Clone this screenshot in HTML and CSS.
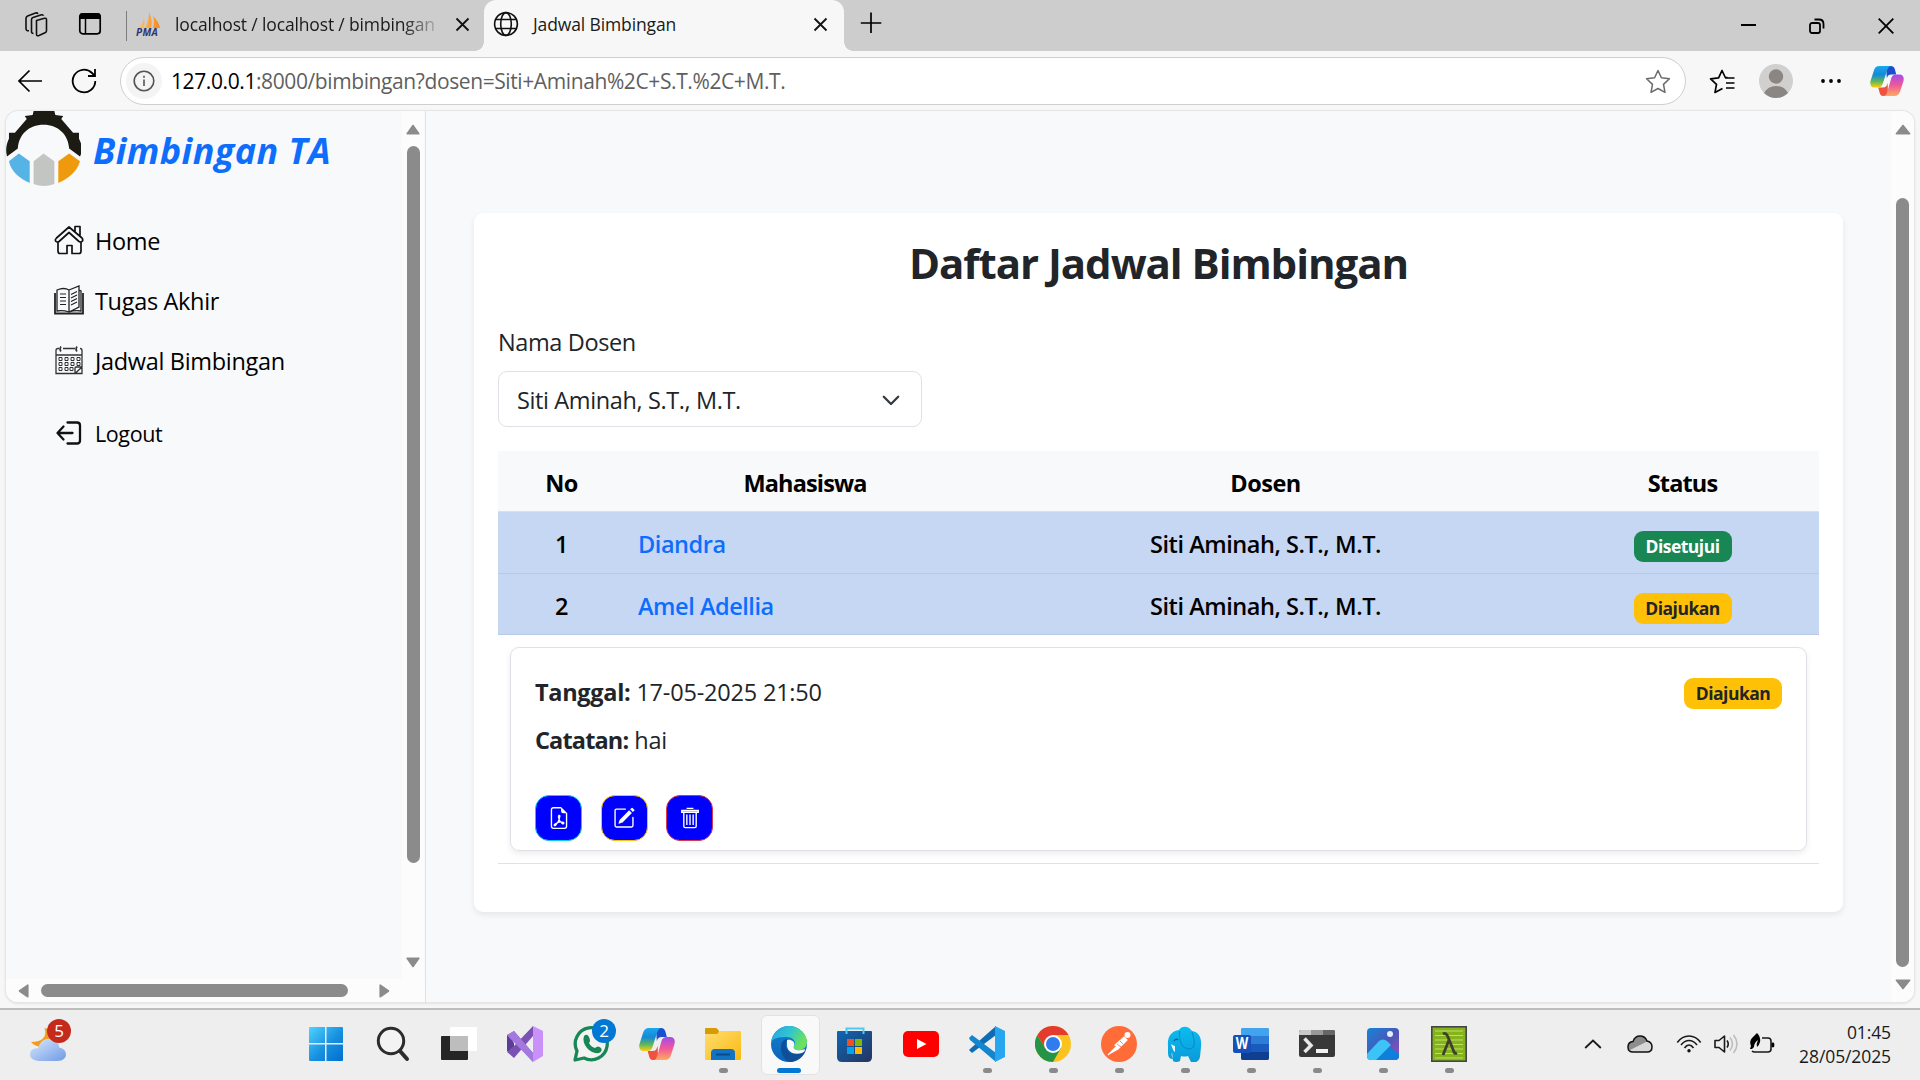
FILE: index.html
```html
<!DOCTYPE html>
<html lang="id">
<head>
<meta charset="utf-8">
<title>Jadwal Bimbingan</title>
<link rel="stylesheet" href="styles.css">
</head>
<body>
<svg width="0" height="0" class="defs" aria-hidden="true">
  <defs>
    <linearGradient id="cpA" x1="0" y1="0" x2="0" y2="1"><stop offset="0" stop-color="#1aa7ee"/><stop offset=".4" stop-color="#1489d8"/><stop offset=".7" stop-color="#59b560"/><stop offset="1" stop-color="#ffd008"/></linearGradient>
    <linearGradient id="cpB" x1="0" y1="0" x2="0" y2="1"><stop offset="0" stop-color="#a24ce8"/><stop offset=".5" stop-color="#f0589a"/><stop offset="1" stop-color="#ffab5c"/></linearGradient>
    <symbol id="copilot" viewBox="0 0 36 34">
      <path d="M17 1h5c2.500 0 3.800 1.300 4.500 4l1.300 5h-5c-3 0-4 1-5 4z" fill="#1b4fd0"/>
      <path d="M19 33h-5c-2.500 0-3.300-1.500-4-4l-1.300-5h5c3 0 4-2 5-5z" fill="#ee5340"/>
      <path d="M10 1h13c-3 0-4 2-5 5l-4.500 14c-1 3-2.500 4-5.500 4H5c-4 0-5.500-3-4.500-7L4 6c1-3.500 3-5 6-5z" fill="url(#cpA)"/>
      <path d="M26 33H14c3 0 3.500-2 4.500-5l4-14c1-3 2.500-4 5.500-4h3c4 0 5.500 3 4.500 7L32 28c-1 3.500-3 5-6 5z" fill="url(#cpB)"/>
    </symbol>
    <linearGradient id="winG" x1="0" y1="0" x2="1" y2="1"><stop offset="0" stop-color="#4fd3ff"/><stop offset=".55" stop-color="#168fe0"/><stop offset="1" stop-color="#0070cf"/></linearGradient>
    <linearGradient id="folderG" x1="0" y1="0" x2="1" y2="1"><stop offset="0" stop-color="#ffdd70"/><stop offset="1" stop-color="#fbb911"/></linearGradient>
    <linearGradient id="edgeTop" x1="0" y1="0" x2="1" y2=".4"><stop offset="0" stop-color="#2b9fe3"/><stop offset=".5" stop-color="#2cc3d5"/><stop offset="1" stop-color="#6be25a"/></linearGradient>
    <linearGradient id="edgeLow" x1="0" y1="0" x2="0" y2="1"><stop offset="0" stop-color="#1780d0"/><stop offset="1" stop-color="#0b63b8"/></linearGradient>
    <linearGradient id="storeG" x1="0" y1="0" x2="1" y2="1"><stop offset="0" stop-color="#0d67b5"/><stop offset="1" stop-color="#26345f"/></linearGradient>
    <linearGradient id="cloudG" x1="0" y1="0" x2="1" y2="1"><stop offset="0" stop-color="#dce9fc"/><stop offset="1" stop-color="#6d9ae6"/></linearGradient>
    <linearGradient id="photoG" x1="0" y1="0" x2="1" y2="1"><stop offset="0" stop-color="#1684d8"/><stop offset=".5" stop-color="#4859b9"/><stop offset="1" stop-color="#a34bb7"/></linearGradient>
    <linearGradient id="eleG" x1="0" y1="0" x2="0" y2="1"><stop offset="0" stop-color="#0abdf2"/><stop offset="1" stop-color="#0a9ad8"/></linearGradient>
    <linearGradient id="sailG" x1="0" y1="0" x2="1" y2="0"><stop offset="0" stop-color="#fbc36b"/><stop offset="1" stop-color="#f58a1f"/></linearGradient>
  </defs>
</svg>

<header class="tabstrip">
  <svg class="ic-work" width="28" height="28" viewBox="0 0 28 28" fill="none" stroke="#111" stroke-width="1.600" stroke-linejoin="round"><path d="M14.500 9.500l8-2.200q2-.5 2 1.500v11q0 1.500-1.500 2l-6 2.700q-2.500 1-2.500-1.500z"/><path d="M11.500 22.500q-2 0-2-2V8.500q0-1.500 1.500-2l8.500-2.700q1.500-.4 2 1"/><path d="M7 19.800q-3 .2-3-2V7.500q0-2 1.600-2.600L13.500 2q1.700-.5 2.500.8"/></svg>
  <svg class="ic-vert" width="24" height="24" viewBox="0 0 24 24"><rect x="1.800" y="1.800" width="20.400" height="20" rx="3" fill="none" stroke="#000" stroke-width="1.700"/><path d="M1.500 4q0-3 3-3h15q3 0 3 3v3h-21z"/><path d="M7.500 7v14" stroke="#000" stroke-width="1.500"/></svg>
  <span class="sep"></span>
  <div class="tab tab-idle">
    <span class="pma-icon"><svg width="26" height="17" viewBox="0 0 26 17"><path d="M2 17q5-4 6-10 1 5 0 10zM9 17q4-7 4-16 4 8 2 16zM17 17q2-6 0-12 6 6 7 12z" fill="url(#sailG)"/></svg><span class="pma">PMA</span></span>
    <span class="tab-title faded">localhost / localhost / bimbingan</span>
    <svg class="tab-x" width="15" height="15" viewBox="0 0 15 15"><path d="M1.500 1.500l12 12M13.500 1.500l-12 12"/></svg>
  </div>
  <div class="tab tab-on">
    <svg width="26" height="26" viewBox="0 0 26 26" fill="none" stroke="#111" stroke-width="1.600"><circle cx="13" cy="13" r="11.400"/><ellipse cx="13" cy="13" rx="5.300" ry="11.400"/><path d="M2.500 8.500h21M2.500 17.500h21"/></svg>
    <span class="tab-title">Jadwal Bimbingan</span>
    <svg class="tab-x" width="15" height="15" viewBox="0 0 15 15"><path d="M1.500 1.500l12 12M13.500 1.500l-12 12"/></svg>
  </div>
  <svg class="ic-plus" width="22" height="22" viewBox="0 0 22 22"><path d="M11 .5v20.500M.8 11h20.500" stroke="#000" stroke-width="1.700"/></svg>
  <div class="winbtns">
    <svg width="15" height="15" viewBox="0 0 15 15"><path d="M0 7h15" stroke="#000" stroke-width="2"/></svg>
    <svg width="16" height="16" viewBox="0 0 16 16" fill="none" stroke="#000" stroke-width="1.800"><rect x="1" y="5" width="10" height="10" rx="2"/><path d="M5.500 1.500h4.500q4.500 0 4.500 4.500v4.500"/></svg>
    <svg width="16" height="16" viewBox="0 0 16 16"><path d="M.7.700l14.600 14.600M15.300.700L.7 15.300" stroke="#000" stroke-width="1.800"/></svg>
  </div>
</header>

<div class="toolbar">
  <svg class="ic-back" width="26" height="24" viewBox="0 0 26 24" fill="none" stroke="#000" stroke-width="1.700"><path d="M25 12H2M12.500 1.500L2 12l10.500 10.500"/></svg>
  <svg class="ic-reload" width="26" height="26" viewBox="0 0 26 26" fill="none" stroke="#000" stroke-width="1.800"><path d="M24.300 13A11.300 11.300 0 1 1 21 5l2.500 2.500M24 1v7h-7"/></svg>
  <div class="omnibox">
    <span class="info"><svg width="22" height="22" viewBox="0 0 22 22" fill="none" stroke="#555" stroke-width="1.600"><circle cx="11" cy="11" r="9.800"/><path d="M11 9.500v6.500M11 5.800v2"/></svg></span>
    <span class="url"><b>127.0.0.1</b>:8000/bimbingan?dosen=Siti+Aminah%2C+S.T.%2C+M.T.</span>
    <svg class="ic-star" width="26" height="25" viewBox="0 0 26 25" fill="none" stroke="#6b6b6b" stroke-width="1.500" stroke-linejoin="round"><path d="M13 1.500l3.400 7.300 8 1-5.900 5.600 1.500 8L13 19.500l-7 3.900 1.500-8L1.600 9.800l8-1z"/></svg>
  </div>
  <svg class="ic-fav" width="26" height="25" viewBox="0 0 26 25" fill="none" stroke="#000" stroke-width="1.700" stroke-linejoin="round"><path d="M18.500 8.500L16.300 8.500 13 1.500 9.600 8.800l-8 1 5.900 5.600-1.500 8 7.500-4M16 9h9.500M17 14h8.500M17 19h8.500"/></svg>
  <svg class="ic-user" width="34" height="34" viewBox="0 0 34 34"><circle cx="17" cy="17" r="17" fill="#d2d0ce"/><circle cx="17" cy="12.500" r="7.200" fill="#8a8683"/><path d="M5 29Q9 22 17 22t12 7a17 17 0 0 1-24 0z" fill="#8a8683"/></svg>
  <svg class="ic-dots" width="20" height="6" viewBox="0 0 20 6"><circle cx="2" cy="3" r="1.900"/><circle cx="10" cy="3" r="1.900"/><circle cx="18" cy="3" r="1.900"/></svg>
  <svg class="ic-cop" width="34" height="32"><use href="#copilot"/></svg>
</div>

<div class="frame">
  <div class="page">
    <aside class="side">
      <div class="side-row">
        <div class="side-body">
          <div class="brand">
            <svg width="75" height="75" viewBox="0 0 76 76"><path d="M1 46C-1 38 1 32 3 28L3 22 9 22 21 8 19 5 27 4 28 0H49L50 4 58 5 56 8 68 22 74 22 74 28C77 34 78 40 75 46L64 38C63 24 53 14 38 14S13 24 12 38z" fill="#1b1b14"/><path d="M3 51L13 43 24 51V73Q6 65 3 51z" fill="#56b3e6"/><path d="M28 51L38 43 49 51V74Q38 78 28 74z" fill="#c3c5c3"/><path d="M53 51L64 43 75 51Q71 65 53 73z" fill="#ef9a0c"/></svg>
            <span>Bimbingan TA</span>
          </div>
          <nav class="menu">
            <a class="item"><svg width="30" height="30" viewBox="0 0 30 30" fill="none" stroke="#111" stroke-width="1.700" stroke-linejoin="round"><path d="M2 16.500q-1.500-1.500.5-3.500L15 2l13 11q1.500 2 0 3.500-1 1-3 0L15 7.500 5 16.500q-2 1-3 0zM4 17v9q0 2.500 2 2.500h7V20.500h5v8h7q2 0 2-2.500V17M21 6.500v-5h5v9"/></svg>Home</a>
            <a class="item"><svg width="30" height="30" viewBox="0 0 30 30" fill="none" stroke="#222" stroke-width="1.300"><path d="M3 5q7-3 12 0v22q-6-2-12-1zM15 5l10-4v21l-10 5M25 5l2 1v20q-6-1-12 1" /><path d="M1 8v20.500h28V8" stroke-width="1.800"/><path d="M6 9h6M6 12.500h6M6 16h6M6 19.500h6M17 9.500l6-3M17 13l6-3M17 16.500l6-3M17 20l6-3" stroke-width="1.100"/></svg>Tugas Akhir</a>
            <a class="item"><svg width="30" height="30" viewBox="0 0 30 30" fill="none" stroke="#333" stroke-width="1.300"><path d="M5 3.500H4Q2 3.500 2 5.500V28.500H21L28 22V5.500Q28 3.500 26 3.500M9 3.500h12M2 10h26M21 28.500V23q0-1 1-1h6v6.500h-7" /><path d="M7 6.500q-2-2 0-5M23 6.500q-2-2 0-5" stroke-width="1.600"/><path d="M5 12.500h3v3h-3zM11 12.500h3v3h-3zM17 12.500h3v3h-3zM23 12.500h3v3h-3zM5 17.500h3v3h-3zM11 17.500h3v3h-3zM17 17.500h3v3h-3zM23 17.500h3v3h-3zM5 22.500h3v3h-3zM11 22.500h3v3h-3zM16 22.500h3v3h-3z" stroke-width="1"/></svg>Jadwal Bimbingan</a>
            <a class="item out"><svg width="30" height="30" viewBox="0 0 30 30" fill="none" stroke="#111" stroke-width="2.300" stroke-linecap="round" stroke-linejoin="round"><path d="M13.500 4.500H23q3 0 3 3v15q0 3-3 3h-9.500M18.500 15H4M9.500 8.500L3.500 15l6 6.500"/></svg>Logout</a>
          </nav>
        </div>
        <div class="vbar">
          <svg width="14" height="11" viewBox="0 0 14 11"><path d="M7 1.500L12.800 9.800H1.200z"/></svg>
          <span class="thumb thumb-side"></span>
          <svg class="last" width="14" height="11" viewBox="0 0 14 11"><path d="M7 9.500L12.800 1.200H1.200z"/></svg>
        </div>
      </div>
      <div class="hbar">
        <svg width="11" height="14" viewBox="0 0 11 14"><path d="M1.500 7L9.800 1.200V12.800z"/></svg>
        <span class="hthumb"></span>
        <svg class="hlast" width="11" height="14" viewBox="0 0 11 14"><path d="M9.500 7L1.200 1.200V12.800z"/></svg>
      </div>
    </aside>

    <main class="main">
      <section class="card">
        <h1>Daftar Jadwal Bimbingan</h1>
        <div class="label">Nama Dosen</div>
        <div class="select"><span>Siti Aminah, S.T., M.T.</span><svg width="18" height="11" viewBox="0 0 18 11"><path d="M1.800 1.800L9 9l7.200-7.200" fill="none" stroke="#343a40" stroke-width="2.300" stroke-linecap="round" stroke-linejoin="round"/></svg></div>
        <table class="grid">
          <colgroup><col class="c-no"><col class="c-mhs"><col class="c-dsn"><col class="c-st"></colgroup>
          <thead><tr><th>No</th><th class="tight">Mahasiswa</th><th>Dosen</th><th class="tight">Status</th></tr></thead>
          <tbody>
            <tr class="r"><td>1</td><td class="name">Diandra</td><td>Siti Aminah, S.T., M.T.</td><td><span class="badge ok">Disetujui</span></td></tr>
            <tr class="r"><td>2</td><td class="name">Amel Adellia</td><td>Siti Aminah, S.T., M.T.</td><td><span class="badge wait">Diajukan</span></td></tr>
          </tbody>
        </table>
        <div class="detail-row">
          <article class="detail">
            <div class="detail-top">
              <div>
                <p><strong>Tanggal:</strong> <span>17-05-2025 21:50</span></p>
                <p><strong class="note">Catatan:</strong> <span>hai</span></p>
              </div>
              <span class="badge wait">Diajukan</span>
            </div>
            <div class="actions">
              <span class="btn pdf"><svg width="22" height="22" viewBox="0 0 16 16"><path d="M14 14V4.500L9.500 0H4a2 2 0 0 0-2 2v12a2 2 0 0 0 2 2h8a2 2 0 0 0 2-2M9.500 3A1.500 1.500 0 0 0 11 4.500h2V14a1 1 0 0 1-1 1H4a1 1 0 0 1-1-1V2a1 1 0 0 1 1-1h5.500z"/><path d="M4.603 14.087a.8.800 0 0 1-.438-.42c-.195-.388-.13-.776.08-1.102.198-.307.526-.568.897-.787a7.700 7.700 0 0 1 1.482-.645 20 20 0 0 0 1.062-2.227 7.300 7.300 0 0 1-.43-1.295c-.086-.4-.119-.796-.046-1.136.075-.354.274-.672.650-.823.192-.077.400-.12.602-.077a.7.700 0 0 1 .477.365c.088.164.120.356.127.538.007.188-.012.396-.047.614-.084.510-.270 1.134-.520 1.794a11 11 0 0 0 .980 1.686 5.800 5.800 0 0 1 1.334.050c.364.066.734.195.960.465.120.144.193.320.200.518.007.192-.047.382-.138.563a1.040 1.040 0 0 1-.354.416.860.860 0 0 1-.510.138c-.331-.014-.654-.196-.933-.417a5.700 5.700 0 0 1-.911-.950 11.700 11.700 0 0 0-1.997.406 11.300 11.300 0 0 1-1.020 1.510c-.292.350-.609.656-.927.787a.800.800 0 0 1-.580.029"/></svg></span>
              <span class="btn edit"><svg width="22" height="22" viewBox="0 0 16 16"><path d="M15.502 1.940a.5.500 0 0 1 0 .706L14.459 3.690l-2-2L13.502.646a.5.500 0 0 1 .707 0l1.293 1.293zm-1.750 2.456-2-2L4.939 9.210a.5.500 0 0 0-.121.196l-.805 2.414a.250.250 0 0 0 .316.316l2.414-.805a.5.500 0 0 0 .196-.120z"/><path fill-rule="evenodd" d="M1 13.500A1.500 1.500 0 0 0 2.500 15h11a1.500 1.500 0 0 0 1.500-1.500v-6a.5.500 0 0 0-1 0v6a.5.500 0 0 1-.5.500h-11a.5.500 0 0 1-.5-.5v-11a.5.500 0 0 1 .5-.5H9a.5.500 0 0 0 0-1H2.500A1.500 1.500 0 0 0 1 2.500z"/></svg></span>
              <span class="btn del"><svg width="22" height="22" viewBox="0 0 16 16" fill="none" stroke="#fff"><path d="M6 1.500V1h4v.5M2 2.500h12v1.300H2zM3.500 4v10q0 1 1 1h7q1 0 1-1V4M5.700 5.500v7.500M8 5.500v7.500M10.300 5.500v7.500"/></svg></span>
            </div>
          </article>
        </div>
      </section>
    </main>
    <div class="vbar vbar-main">
      <svg width="16" height="11" viewBox="0 0 16 11"><path d="M8 1.500L14.600 9.800H1.400z"/></svg>
      <span class="thumb thumb-main"></span>
      <svg class="last" width="16" height="11" viewBox="0 0 16 11"><path d="M8 9.500L14.600 1.200H1.400z"/></svg>
    </div>
  </div>
</div>

<footer class="taskbar">
  <div class="weather"><svg width="37" height="34" viewBox="0 0 38 43" preserveAspectRatio="none"><path d="M15 1Q19 19 1 19 5 25 12 25 22 24 21 10 20 3 15 1z" fill="#f59b1c"/><path d="M9 43Q0 42 0 34.500T8 27Q11 15 20 15T30 26Q37 28 37 35T28 43z" fill="url(#cloudG)"/></svg><span class="count red">5</span></div>
  <div class="apps">
    <span class="app first"><svg width="36" height="36" viewBox="0 0 36 36"><path d="M1 2q0-1 1-1h15v16H1zM18.500 1H34q1 0 1 1v15H18.500zM1 18.500h16V35H2q-1 0-1-1zM18.500 18.500H35V34q0 1-1 1H18.500z" fill="url(#winG)"/></svg></span>
    <span class="app"><svg width="36" height="36" viewBox="0 0 36 36" fill="none" stroke="#2c2c2c"><circle cx="16" cy="15" r="12.700" fill="#f3f3f3" stroke-width="3"/><path d="M25 25l7 8" stroke-width="4" stroke-linecap="round"/></svg></span>
    <span class="app"><svg width="38" height="36" viewBox="0 0 38 36"><rect x="1" y="10" width="27" height="24" rx="1" fill="#252525"/><rect x="10" y="1" width="27" height="24" rx="1" fill="#fff"/><path d="M10 10h18v15H10z" fill="#bdbdbd"/></svg></span>
    <span class="app"><svg width="36" height="36" viewBox="0 0 36 36"><path d="M0 9l7-4 19 22v9L7 15 0 21z" fill="#8a5fc9"/><path d="M0 9l7 8v12l-7-4z" fill="#5c3d94"/><path d="M7 32L0 26 8 19 26 0v10z" fill="#7b51b5"/><path d="M0 9L7 5 26 27V36z" fill="#a379dd"/><path d="M26 0l10 5v25l-10 6z" fill="#cb91fa"/></svg></span>
    <span class="app"><svg width="38" height="38" viewBox="0 0 38 38"><path d="M3 35l2-9A16 16 0 1 1 12 33z" fill="#f3f3f3" stroke="#188755" stroke-width="3.300" stroke-linejoin="round"/><path d="M12 11q3-3 5 1t0 6q2 4 6 5 3-3 6 0 2 3-2 5-7 1-12-5t-3-12z" fill="#188755"/></svg><span class="count blue">2</span></span>
    <span class="app"><svg width="36" height="34"><use href="#copilot"/></svg></span>
    <span class="app run"><svg width="36" height="36" viewBox="0 0 36 36"><path d="M0 3q0-1 1-1h10q1 0 3 3v4H0z" fill="#d99b05"/><path d="M0 8h12l3-3h20q1 0 1 1v27q0 1-1 1H1q-1 0-1-1z" fill="url(#folderG)"/><path d="M6 34v-7q0-4 4-4h16q4 0 4 4v7z" fill="#1173c2"/><path d="M11 28.500h14" stroke="#0a4a8a" stroke-width="2"/></svg></span>
    <span class="app run active"><svg width="36" height="36" viewBox="0 0 36 36"><circle cx="18" cy="18" r="18" fill="url(#edgeLow)"/><path d="M0 17C1 7 9 0 18 0s18 7 18 16c0 6-5 9-10 8-3-.5-4-2-3-4 3-5-2-9-7-9C8 11 1 12 0 17z" fill="url(#edgeTop)"/><path d="M10 22c0-6 3-9 7-9-5 4-2 13 6 15 5 1 9-2 11-2-4 8-11 10-15 10-6-2-9-8-9-14z" fill="#0f4f97"/><path d="M16 14c3-1 9 1 7 6-1 2 0 3.500 3 4 3 .5 6 0 8-1 0 2-1 3-3 4-7 2-14 0-15-7 0-2 0-4 0-6z" fill="#f8f8f8"/></svg></span>
    <span class="app"><svg width="36" height="36" viewBox="0 0 36 36"><path d="M0 6q0-1 1-1h33q1 0 1 1v25q0 5-5 5H5q-5 0-5-5z" fill="url(#storeG)"/><path d="M9.500 8V2.500h17V8" fill="none" stroke="#4cc9f5" stroke-width="2"/><path d="M10 13h7v7h-7z" fill="#f25022"/><path d="M18 13h7v7h-7z" fill="#7fba00"/><path d="M10 21h7v7h-7z" fill="#00a4ef"/><path d="M18 21h7v7h-7z" fill="#ffb900"/></svg></span>
    <span class="app"><svg width="36" height="36" viewBox="0 0 36 36"><rect y="5" width="36" height="26" rx="5" fill="#f00"/><path d="M14 13l9.500 5-9.500 5z" fill="#fff"/></svg></span>
    <span class="app run"><svg width="36" height="36" viewBox="0 0 36 36"><path d="M0 24l3 3 24-18V0L1 23z" fill="#0e6db3"/><path d="M0 12l3-3 24 18v9L1 14z" fill="#1286cf"/><path d="M26 0l10 5v26l-10 5z" fill="#27a5ee"/></svg></span>
    <span class="app run"><svg width="36" height="36" viewBox="0 0 36 36"><circle cx="18" cy="18" r="18" fill="#fcc31e"/><path d="M2.400 9A18 18 0 0 0 18 36l8-14-8-4-8 4z" fill="#259447"/><path d="M2.400 9A18 18 0 0 1 33.600 9H18l-8 13z" fill="#e33b2e"/><circle cx="18" cy="18" r="9" fill="#fff"/><circle cx="18" cy="18" r="7" fill="#2f7cee"/></svg></span>
    <span class="app run"><svg width="36" height="36" viewBox="0 0 36 36"><circle cx="18" cy="18" r="18" fill="#ff6c37"/><circle cx="26.500" cy="9" r="3" fill="#fff"/><path d="M23 11l3 3-9 9-9 5 8-8-2-1zM10 26l-3 3" fill="#fff" stroke="#fff" stroke-width="1.200"/><path d="M16 18l4 3M19 15l3 3" stroke="#ff6c37" stroke-width=".8"/></svg></span>
    <span class="app run"><svg width="36" height="36" viewBox="0 0 36 36"><path d="M1 20C0 10 5 5 12 4c3-5 10-4 13 1 7 1 10 7 9 16l-1 10q-1 4-4 5h-5l-3-6q-4 1-7 0l-1 5q-4 2-7 0l-1-9q-1 4 1 7-5 0-5-6z" fill="url(#eleG)"/><path d="M13 5c-2 9 2 18 9 18s6-8 3-17" fill="none" stroke="#0788bd" stroke-width="1"/><path d="M4 18q3 2 4 2v6q-2-1-4-8z" fill="#eaf6ff"/><path d="M7 15q2-3 4-1" fill="none" stroke="#0c5a80" stroke-width="1.200"/></svg></span>
    <span class="app run"><svg width="36" height="36" viewBox="0 0 36 36"><rect x="8" y="2" width="28" height="32" rx="2" fill="#2c7cd8"/><path d="M8 10V4q0-2 2-2h24q2 0 2 2v6z" fill="#42a4ee"/><path d="M8 18h28v8H8z" fill="#185abd"/><path d="M8 26h28v6q0 2-2 2H10q-2 0-2-2z" fill="#103f91"/><rect y="9" width="18" height="18" rx="2" fill="#1551b8"/><text x="2.800" y="23" class="word" textLength="12.500" lengthAdjust="spacingAndGlyphs">W</text></svg></span>
    <span class="app run"><svg width="36" height="36" viewBox="0 0 36 36"><rect y="4" width="36" height="27" rx="2" fill="#383838"/><path d="M0 9V6q0-2 2-2h10v5z" fill="#c8c8c8"/><path d="M12 4h12v5H12z" fill="#989898"/><path d="M24 4h10q2 0 2 2v3H24z" fill="#666"/><path d="M5.500 12.500l6.500 7-6.500 6.500" fill="none" stroke="#e8e8e8" stroke-width="3.500"/><path d="M17 23h12v4H17z" fill="#f2f2f2"/></svg></span>
    <span class="app run"><svg width="36" height="36" viewBox="0 0 36 36"><rect x="2" y="2" width="32" height="32" rx="4" fill="url(#photoG)"/><circle cx="25" cy="8" r="3" fill="#e8eefc"/><path d="M8 34L24 20l10 8v2q0 4-4 4z" fill="#0f7fdc"/><path d="M2 28L14 15q4-3 8 0l4 4-15 15H6q-4 0-4-4z" fill="#3cc4f7"/></svg></span>
    <span class="app run"><svg width="36" height="36" viewBox="0 0 36 36"><rect x=".8" y=".8" width="34.400" height="34.400" fill="#85b31c" stroke="#454545" stroke-width="1.600"/><path d="M4 5h28M4 9.500h28M4 14h28M4 18.500h28M4 23h28M4 27.500h28M4 32h28" stroke="#c0e060" stroke-width="1"/><path d="M12 8q3-2 5 3l6 15q1 2 3 1M18 14l-6 15" fill="none" stroke="#3f3f2e" stroke-width="2.800"/></svg></span>
  </div>
  <div class="tray">
    <svg width="18" height="10" viewBox="0 0 18 10"><path d="M1.200 9L9 1.500 16.800 9" fill="none" stroke="#1a1a1a" stroke-width="1.800"/></svg>
    <svg class="t-cloud" width="26" height="18" viewBox="0 0 26 18"><path d="M6 17Q1 17 1 12T6 6.500Q8 1 13 1T20 6Q25 7 25 12T20 17z" fill="#d8d8d8"/><path d="M1 12Q1 7 6 6.500 8 1 13 1T20 6.500L9 12 3 15z" fill="#8d8d8d"/><path d="M6 17Q1 17 1 12T6 6.500Q8 1 13 1T20 6Q25 7 25 12T20 17z" fill="none" stroke="#111" stroke-width="1.500"/></svg>
    <svg class="t-wifi" width="26" height="20" viewBox="0 0 26 20" fill="none" stroke="#1a1a1a" stroke-width="1.600"><path d="M1.300 8.500Q6 2 13 2t11.700 6.500M5 11q3.500-4.500 8-4.500t8 4.500M8.500 14q2-3 4.500-3t4.500 3"/><circle cx="13" cy="16.700" r="1.700" fill="#111" stroke="none"/></svg>
    <svg class="t-vol" width="26" height="22" viewBox="0 0 26 22" fill="none" stroke-width="1.600"><path d="M2 7.500v7h4l5.500 4.500V3L6 7.500z" stroke="#1a1a1a" stroke-linejoin="round"/><path d="M14 7.500q2.500 3.500 0 7" stroke="#1a1a1a"/><path d="M17 4.500q5 6.500 0 13M20.500 2q7 9 0 18" stroke="#bdbdbd"/></svg>
    <svg class="t-bat" width="26" height="22" viewBox="0 0 26 22"><path d="M13 5h6q3 0 3 3v8q0 3-3 3H6q-2 0-3-1" fill="none" stroke="#1a1a1a" stroke-width="1.600"/><rect x="22.500" y="9.500" width="2.800" height="5" rx="1.400"/><path d="M8 0q4 4 3 9-1 4-3 5-1-3 1-7-4 3-4 7l-2 2H1l1-3Q0 8 3 5t5-5z"/></svg>
    <div class="clock"><span class="time">01:45</span><span class="date">28/05/2025</span></div>
  </div>
</footer>
</body>
</html>
```
FILE: styles.css
```css
* { box-sizing: border-box; }
html, body { margin: 0; height: 100%; }
body {
  width: 1920px; height: 1080px; overflow: hidden;
  display: flex; flex-direction: column;
  font-family: "Open Sans", "Noto Sans", sans-serif;
  background: #f7f7f7; color: #212529;
}
svg { display: block; flex: none; }
.defs { position: absolute; }

/* tab strip */
.tabstrip { height: 51px; background: #cdcdcd; display: flex; align-items: flex-start; padding-left: 22px; flex: none; }
.ic-work { margin-top: 11px; }
.ic-vert { margin: 12px 0 0 28px; }
.sep { width: 1px; height: 30px; margin: 11px 0 0 24px; background: #7d7d7d; }
.tab { height: 51px; display: flex; align-items: flex-start; padding-top: 11px; position: relative; }
.tab-idle { width: 357px; padding-left: 9px; }
.tab-on { width: 360px; padding-left: 9px; background: #f7f7f7; border-radius: 12px 12px 0 0; }
.tab-on::before, .tab-on::after { content: ""; position: absolute; bottom: 0; width: 9px; height: 9px; }
.tab-on::before { left: -9px; background: radial-gradient(circle at 0 0, #cdcdcd 8.500px, #f7f7f7 9px); }
.tab-on::after { right: -9px; background: radial-gradient(circle at 100% 0, #cdcdcd 8.500px, #f7f7f7 9px); }
.tab-title { margin-left: 13px; font-size: 17.500px; line-height: 26px; letter-spacing: -.12px; color: #1a1a1a; white-space: nowrap; }
.tab-on .tab-title { margin-left: 14px; width: 280px; }
.faded { width: 268px; margin-right: 12px; letter-spacing: -.15px; -webkit-mask-image: linear-gradient(90deg, #000 85%, transparent 100%); mask-image: linear-gradient(90deg, #000 85%, transparent 100%); }
.tab-x { margin-top: 6px; stroke: #111; stroke-width: 1.800; }
.pma-icon { width: 26px; display: flex; flex-direction: column; }
.pma { margin-top: -3px; font-size: 10px; font-weight: 700; font-style: italic; line-height: 14px; color: #2e3572; letter-spacing: .3px; }
.ic-plus { margin: 12px 0 0 16px; }
.winbtns { margin-left: auto; margin-right: 26px; display: flex; gap: 53px; padding-top: 18px; }

/* toolbar */
.toolbar { height: 60px; flex: none; display: flex; align-items: center; padding: 0 16px 0 17px; }
.ic-reload { margin-left: 28px; }
.omnibox { margin-left: 23px; width: 1566px; height: 48px; border: 1px solid #cfcfcf; border-radius: 24px; background: #fff; display: flex; align-items: center; padding: 0 14px 0 5px; }
.info { width: 36px; height: 36px; border-radius: 50%; background: #f4f4f4; display: grid; place-items: center; }
.url { margin-left: 9px; font-size: 21px; line-height: 28px; letter-spacing: -.4px; color: #5f5f5f; white-space: nowrap; }
.url b { font-weight: 400; color: #000; }
.ic-star { margin-left: auto; }
.ic-fav { margin-left: 23px; }
.ic-user { margin-left: 24px; }
.ic-dots { margin-left: 28px; }
.ic-cop { margin-left: auto; }

/* page frame */
.frame { height: 897px; flex: none; padding: 0 6px 6px; }
.page { height: 891px; display: flex; border-radius: 12px; overflow: hidden; background: #f8f9fb; box-shadow: 0 0 0 1px #e6e6e6, 0 1px 3px #ccc; }
.side { width: 420px; border-right: 1px solid #dee2e6; display: flex; flex-direction: column; flex: none; }
.side-row { height: 868px; display: flex; }
.side-body { width: 396px; }
.brand { display: flex; align-items: flex-start; height: 76px; }
.brand span { margin-left: 12px; padding-top: 16px; font-size: 36px; line-height: 48px; font-weight: 700; font-style: italic; letter-spacing: .4px; color: #0d6efd; white-space: nowrap; }
.menu { padding: 23px 0 0 48px; display: flex; flex-direction: column; }
.item { height: 60px; display: flex; align-items: center; gap: 11px; font-size: 23.500px; color: #000; letter-spacing: -.32px; padding-top: 2px; white-space: nowrap; }
.item svg { margin-top: -2px; }
.item.out { margin-top: 12px; font-size: 21.500px; letter-spacing: -.4px; }
.item.out svg { margin-top: 0; }
.vbar { width: 22px; background: #fcfcfc; display: flex; flex-direction: column; align-items: center; padding-top: 13px; fill: #8b8b8b; stroke: #8b8b8b; stroke-width: 1.600; stroke-linejoin: round; }
.thumb { width: 13px; border-radius: 7px; background: #8b8b8b; }
.thumb-side { height: 717px; margin-top: 11px; }
.last { margin-top: auto; }
.side .vbar { padding-bottom: 11px; }
.hbar { height: 23px; background: #fcfcfc; display: flex; align-items: center; padding-left: 12px; fill: #8b8b8b; stroke: #8b8b8b; stroke-width: 1.600; stroke-linejoin: round; }
.hthumb { width: 307px; height: 13px; border-radius: 7px; background: #8b8b8b; margin-left: 12px; }
.hlast { margin-left: 31px; }
.main { flex: 1; padding: 102px 48px 0; }
.vbar-main { width: 23px; padding-bottom: 12px; }
.thumb-main { height: 769px; margin-top: 63px; }

/* schedule card */
.card { height: 699px; background: #fff; border-radius: 9px; padding: 25px 24px 24px; box-shadow: 0 3px 6px rgba(0,0,0,.075); }
h1 { margin: 0; font-size: 42px; line-height: 50px; font-weight: 700; text-align: center; letter-spacing: -1.050px; }
.label { margin-top: 36px; font-size: 23.500px; line-height: 36px; letter-spacing: -.38px; }
.select { margin-top: 11px; width: 424px; height: 56px; border: 1px solid #dee2e6; border-radius: 9px; display: flex; align-items: center; justify-content: space-between; padding: 2px 21px 0 18px; font-size: 23.500px; letter-spacing: -.38px; }
.grid { margin-top: 24px; width: 1321px; table-layout: fixed; border-collapse: separate; border-spacing: 0; font-size: 23.500px; color: #000; }
.c-no { width: 127px; } .c-mhs { width: 360px; } .c-dsn { width: 561px; } .c-st { width: 273px; }
.grid th, .grid td { padding: 3px 12px 0; text-align: center; height: 61px; line-height: 36px; }
.grid th { background: #f8f9fa; font-weight: 700; border-bottom: 1px solid #dfe0e2; letter-spacing: -.5px; }
.grid th.tight { letter-spacing: -.85px; }
.grid td { background: #c6d7f3; font-weight: 600; border-bottom: 1px solid #b9cae6; letter-spacing: -.45px; }
.grid .r:first-child td { height: 62px; }
.grid td.name { text-align: left; color: #0d6efd; padding-left: 13px; }
.badge { display: inline-block; height: 31px; width: 98px; border-radius: 9px; font-size: 17.500px; line-height: 31px; font-weight: 700; letter-spacing: -.5px; text-align: center; vertical-align: middle; }
.ok { background: #198754; color: #fff; }
.wait { background: #ffc107; color: #212529; }
.detail-row { padding: 12px; border-bottom: 1px solid #dee2e6; }
.detail { height: 204px; border: 1px solid #dee2e6; border-radius: 9px; box-shadow: 0 3px 6px rgba(0,0,0,.075); padding: 26px 24px 0; }
.detail-top { display: flex; justify-content: space-between; }
.detail-top .badge { margin-top: 4px; }
.detail p { margin: 0 0 12px; font-size: 23.500px; line-height: 36px; letter-spacing: -.2px; }
.detail strong { letter-spacing: -.3px; }
.detail .note { letter-spacing: -.85px; }
.actions { display: flex; gap: 18.500px; margin-top: 25px; }
.btn { width: 47px; height: 46px; border-radius: 14px; background: #00f; border: 1px solid; display: grid; place-items: center; fill: #fff; }
.pdf { border-color: #0dcaf0; } .edit { border-color: #ffc107; } .del { border-color: #dc3545; }

/* taskbar */
.taskbar { height: 72px; flex: none; border-top: 2px solid #bdbdbd; background: #eee; display: flex; }
.weather { position: relative; width: 294px; padding: 17px 0 0 30px; }
.count { position: absolute; width: 24px; height: 24px; border-radius: 50%; color: #fff; font-size: 17px; line-height: 23px; text-align: center; }
.red { background: #c42b1c; left: 47px; top: 9px; }
.blue { background: #0078d4; left: 34px; top: 9px; }
.apps { display: flex; }
.app { width: 66px; height: 70px; padding-bottom: 2px; position: relative; display: grid; place-items: center; }
.app.first { padding-right: 3px; }
.app.run::after { content: ""; position: absolute; left: 29px; bottom: 7px; width: 9px; height: 5px; border-radius: 3px; background: #8a8a8a; }
.app.active::before { content: ""; position: absolute; left: 5px; top: 5px; width: 57px; height: 58px; border-radius: 6px; background: #f9f9f9; border: 1px solid #e2e2e2; }
.app.active svg { position: relative; }
.app.run.active::after { left: 21px; width: 24px; background: #0078d4; }
.word { font: bold 16px "Open Sans", sans-serif; fill: #fff; }
.tray { margin-left: auto; display: flex; align-items: center; padding-right: 29px; }
.tray > svg { margin-top: -3px; }
.t-cloud { margin-left: 25px; }
.tray .t-wifi { margin-left: 23px; }
.t-vol { margin-left: 11px; }
.t-bat { margin-left: 10px; }
.clock { width: 116px; margin-top: -3px; display: flex; flex-direction: column; align-items: flex-end; font-size: 17.500px; line-height: 24px; color: #1a1a1a; letter-spacing: -.1px; }
```
